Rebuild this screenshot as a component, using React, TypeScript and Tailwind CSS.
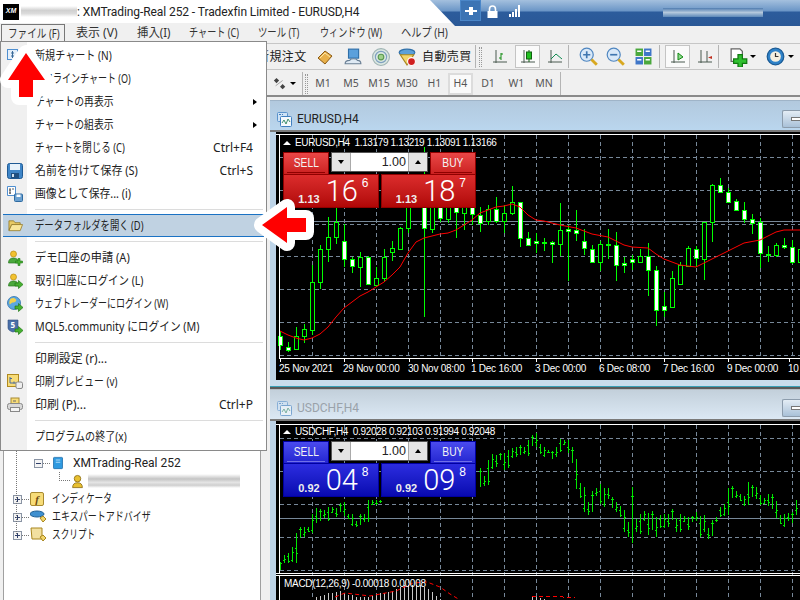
import type { ReactNode } from 'react';

type Candle = [number, number, number, number, number];

// read off the picture at 3x: high, low, body top, body bottom, white body (1) or hollow (0)
const CANDLES_LEFT: Candle[] = [
  [483, 540, 497, 525, 1], [517, 545, 530, 541, 1], [472, 540, 497, 538, 0], [462, 518, 478, 499, 0],
  [286, 495, 337, 479, 0], [225, 358, 238, 337, 0], [141, 275, 202, 238, 0], [100, 221, 157, 202, 0],
  [163, 292, 214, 268, 1], [262, 308, 268, 288, 1], [246, 352, 262, 292, 0], [258, 346, 262, 342, 1],
  [292, 352, 325, 346, 0], [238, 335, 262, 325, 0], [213, 272, 235, 247, 0], [170, 240, 175, 236, 0],
  [60, 188, 100, 175, 0], [40, 100, 60, 90, 0], [-70, 440, 90, 175, 1], [90, 188, 100, 176, 0],
  [90, 155, 100, 145, 1], [90, 158, 100, 146, 0], [90, 205, 100, 127, 1], [90, 180, 100, 130, 0],
  [90, 165, 100, 133, 1], [112, 186, 134, 160, 1], [105, 165, 118, 152, 0], [80, 160, 118, 152, 1],
  [105, 190, 130, 152, 0], [48, 135, 97, 130, 0], [98, 230, 97, 205, 1], [185, 228, 205, 226, 1],
];

const CANDLES_RIGHT: Candle[] = [
  [400, 458, 424, 428, 1], [414, 452, 426, 430, 1], [424, 488, 427, 433, 1], [310, 468, 391, 433, 0],
  [375, 542, 388, 392, 1], [330, 422, 389, 400, 1], [388, 465, 424, 445, 1], [436, 488, 446, 487, 1],
  [424, 512, 433, 485, 0], [388, 476, 432, 434, 1], [396, 542, 436, 496, 1], [470, 518, 490, 496, 1],
  [465, 510, 478, 487, 1], [447, 490, 469, 487, 0], [430, 587, 469, 511, 1], [498, 677, 511, 631, 1],
  [575, 650, 619, 631, 1], [514, 625, 535, 620, 0], [487, 551, 496, 551, 0], [438, 497, 445, 497, 0],
  [438, 502, 448, 475, 1], [365, 539, 367, 478, 0], [252, 425, 256, 367, 0], [235, 280, 256, 277, 1],
  [265, 310, 277, 307, 1], [298, 332, 304, 331, 1], [306, 370, 331, 358, 1], [343, 402, 358, 368, 1],
  [355, 503, 367, 460, 1], [438, 485, 461, 464, 1], [430, 470, 436, 464, 0], [415, 447, 436, 442, 1],
  [420, 492, 442, 487, 1], [430, 500, 448, 487, 0],
];

const MA_POINTS = [
  [280, 331], [288, 335], [296, 338], [304, 340], [312, 338], [320, 334], [328, 327], [336, 317], [344, 308],
  [352, 302], [360, 296], [368, 292], [376, 287], [384, 282], [392, 275], [400, 267], [408, 253], [416, 242],
  [424, 238], [432, 236], [440, 234], [448, 233], [456, 230], [464, 225], [472, 220], [480, 213], [488, 210],
  [496, 207], [504, 206], [512, 204], [520, 207], [528, 215], [536, 220], [544, 221], [560, 225], [576, 228],
  [592, 234], [608, 237], [624, 245], [632, 247], [648, 248], [656, 254], [664, 259], [680, 265], [696, 267],
  [712, 259], [728, 251], [744, 243], [760, 240], [776, 232], [784, 230], [800, 230],
];

const BARS_LEFT = [
  [515, 540], [495, 520], [490, 518], [470, 515], [430, 518], [412, 445], [410, 440], [410, 425], [372, 430],
  [355, 398], [358, 392], [360, 385], [350, 394], [350, 370], [355, 382], [338, 365], [335, 378], [372, 388],
  [372, 408], [392, 412], [372, 405], [372, 395], [330, 395], [330, 345], [330, 345], [330, 340],
];

const BARS_MID = [
  [235, 290], [258, 288], [210, 285], [192, 238], [195, 232], [188, 210], [190, 240], [180, 235], [175, 205],
  [170, 202], [165, 195], [170, 192], [150, 198],
];

const BARS_RIGHT = [
  [135, 167], [128, 170], [162, 192], [172, 202], [180, 190], [183, 207], [172, 200], [148, 186], [150, 165],
  [150, 190], [172, 218], [208, 296], [280, 323], [292, 365], [335, 375], [303, 365], [295, 318], [282, 342],
  [295, 352], [295, 327], [320, 355], [335, 365], [348, 382], [360, 425], [396, 442], [290, 458], [387, 426],
  [372, 432], [363, 392], [370, 435], [363, 420], [382, 440], [376, 415], [373, 415], [372, 410], [358, 390],
  [385, 426], [373, 426], [378, 395], [382, 420], [378, 395], [366, 392], [378, 442], [376, 425], [415, 446],
  [390, 437], [382, 395], [350, 382], [342, 378], [293, 375], [288, 325], [303, 325], [312, 333], [318, 347],
  [276, 345], [285, 322], [292, 327], [316, 345], [325, 342], [312, 347], [312, 357], [333, 384], [375, 402],
  [372, 412], [370, 392], [365, 398], [330, 375],
];

const MACD_TOPS = [
  622, 618, 615, 608, 608, 606, 604, 608, 614, 614, 620, 622, 622, 622, 618, 612, 610, 608, 606, 602, 596, 590,
  586, 584, 584, 584, 586, 590, 598, 606, 618, 628,
];

const AXIS_LABELS = [
  [279, '25 Nov 2021'], [343, '29 Nov 00:00'], [408, '30 Nov 08:00'], [471, '1 Dec 16:00'], [535, '3 Dec 00:00'],
  [599, '6 Dec 08:00'], [663, '7 Dec 16:00'], [727, '9 Dec 00:00'], [788, '10'],
] as const;

const V_GRID = [312, 344, 376, 408, 440, 472, 504, 536, 568, 600, 632, 664, 696, 728, 760, 792];
const GRID = '#778899';

function CandleMark({ x, c, base }: { x: number; c: Candle; base: number }) {
  const y = (v: number) => Math.round(base + v / 3);
  return (
    <g>
      <line x1={x + 0.5} x2={x + 0.5} y1={y(c[0])} y2={y(c[1])} stroke="#00ff00" />
      <rect
        x={x - 1.5}
        y={y(c[2]) + 0.5}
        width={4}
        height={Math.max(y(c[3]) - y(c[2]), 1)}
        fill={c[4] ? '#ffffff' : '#000000'}
        stroke="#00ff00"
      />
    </g>
  );
}

function BarMark({ x, h, l, i, base }: { x: number; h: number; l: number; i: number; base: number }) {
  const top = Math.round(base + h / 3);
  const bottom = Math.round(base + l / 3);
  const open = Math.round(top + ((bottom - top) * ((i * 3) % 5 + 1)) / 6);
  const close = Math.round(top + ((bottom - top) * ((i * 7) % 5 + 1)) / 6);
  return (
    <g>
      <line x1={x + 0.5} x2={x + 0.5} y1={top} y2={bottom} stroke="#00e800" />
      <line x1={x - 1} x2={x} y1={open + 0.5} y2={open + 0.5} stroke="#00e800" />
      <line x1={x + 1} x2={x + 2} y1={close + 0.5} y2={close + 0.5} stroke="#00e800" />
    </g>
  );
}

function EurChart() {
  const hLines = [157, 190, 224, 256, 289, 322, 355];
  return (
    <svg viewBox="276 132 524 248" className="absolute inset-0 h-full w-full" shapeRendering="crispEdges">
      {V_GRID.map((x) => (
        <line key={x} x1={x + 0.5} x2={x + 0.5} y1={135} y2={358} stroke={GRID} strokeDasharray="4 3" />
      ))}
      {hLines.map((y) => (
        <line key={y} x1={280} x2={800} y1={y + 0.5} y2={y + 0.5} stroke={GRID} strokeDasharray="4 3" />
      ))}
      <line x1={280} x2={800} y1={221.5} y2={221.5} stroke={GRID} />
      {CANDLES_LEFT.map((c, i) => (
        <CandleMark key={i} x={280 + i * 8} c={c} base={170} />
      ))}
      {CANDLES_RIGHT.map((c, i) => (
        <CandleMark key={i} x={536 + i * 8} c={c} base={100} />
      ))}
      <polyline
        points={MA_POINTS.map((p) => p.join(',')).join(' ')}
        fill="none"
        stroke="#ff0000"
        shapeRendering="auto"
      />
      <path d="M276 134.5H800M279.5 134V358M279 358.5H800" stroke="#ffffff" />
      {AXIS_LABELS.map(([x, label]) => (
        <g key={x}>
          <line x1={x + 1.5} x2={x + 1.5} y1={358} y2={362} stroke="#ffffff" />
          <text x={x} y={372} fill="#ffffff" fontSize={10} letterSpacing={-0.25} shapeRendering="auto">
            {label}
          </text>
        </g>
      ))}
    </svg>
  );
}

function ChfChart() {
  const hLines = [438, 471, 504, 537, 570];
  return (
    <svg viewBox="276 421 524 179" className="absolute inset-0 h-full w-full" shapeRendering="crispEdges">
      {V_GRID.map((x) => (
        <line key={x} x1={x + 0.5} x2={x + 0.5} y1={425} y2={600} stroke={GRID} strokeDasharray="4 3" />
      ))}
      {hLines.map((y) => (
        <line key={y} x1={280} x2={800} y1={y + 0.5} y2={y + 0.5} stroke={GRID} strokeDasharray="4 3" />
      ))}
      <line x1={280} x2={800} y1={518.5} y2={518.5} stroke={GRID} />
      {BARS_LEFT.map(([h, l], i) => (
        <BarMark key={i} x={280 + i * 4} h={h} l={l} i={i} base={390} />
      ))}
      {BARS_MID.map(([h, l], i) => (
        <BarMark key={i} x={480 + i * 4} h={h} l={l} i={i} base={390} />
      ))}
      {BARS_RIGHT.map(([h, l], i) => (
        <BarMark key={i} x={532 + i * 4} h={h} l={l} i={i} base={390} />
      ))}
      {MACD_TOPS.map((t, i) => (
        <line key={i} x1={316.5 + i * 4} x2={316.5 + i * 4} y1={Math.round(390 + t / 3)} y2={600} stroke="#c8c8c8" />
      ))}
      {[0, 4, 8, 12, 16, 20].map((d, i) => (
        <line key={d} x1={532.5 + d} x2={532.5 + d} y1={596 + i} y2={600} stroke="#c8c8c8" />
      ))}
      <polyline
        points="335,597 345,593 370,596 396,591 413,583 427,582 440,587 450,594 460,600"
        fill="none"
        stroke="#ff0000"
        strokeDasharray="4 3"
        shapeRendering="auto"
      />
      <polyline points="532,596 550,596 575,598" fill="none" stroke="#ff0000" strokeDasharray="4 3" />
      <path d="M276 424.5H800M279.5 424V573M276 573.5H800M276 575.5H800M279.5 576V600" stroke="#ffffff" />
    </svg>
  );
}

const RED = {
  button: 'border-[#8f0000] bg-linear-to-b from-[#ea4646] to-[#cb2020]',
  price: 'border-[#8f0000] bg-linear-to-b from-[#dc2c2c] to-[#b00606]',
  rule: 'bg-[#8f0000]',
};

const BLUE = {
  button: 'border-[#0000a0] bg-linear-to-b from-[#4a4aee] to-[#2424d0]',
  price: 'border-[#0000a0] bg-linear-to-b from-[#2c2ce0] to-[#0808b0]',
  rule: 'bg-[#7070e8]',
};

function SideButton({ label, theme }: { label: string; theme: typeof RED }) {
  return (
    <div className={`flex h-[22px] w-[46px] flex-col items-center border-x border-t pt-[2px] ${theme.button}`}>
      <span className="scale-x-[.82] text-[12.5px] leading-[16px] text-[#f4f4f4]">{label}</span>
      <span className={`mt-[1px] h-px w-[38px] ${theme.rule}`} />
    </div>
  );
}

function Price({ lead, big, tail, theme }: { lead: string; big: string; tail: string; theme: typeof RED }) {
  return (
    <div className={`flex h-[34px] flex-1 items-start justify-end border pr-[9px] text-white ${theme.price}`}>
      <span className="mt-[17px] mr-[6px] text-[11px] leading-[14px] font-bold text-[#eee]">{lead}</span>
      <span className="mt-[1px] font-['Roboto',sans-serif] text-[29px] leading-[30px] font-light">{big}</span>
      <span className="mt-[1px] ml-[4px] text-[12px] leading-[14px]">{tail}</span>
    </div>
  );
}

function TradePanel({ lead, sell, sellTail, buy, buyTail, theme }: {
  lead: string;
  sell: string;
  sellTail: string;
  buy: string;
  buyTail: string;
  theme: typeof RED;
}) {
  return (
    <div className="absolute top-[20px] left-[7px] w-[193px] font-['Liberation_Sans',sans-serif]">
      <div className="flex items-start gap-[2px]">
        <SideButton label="SELL" theme={theme} />
        <div className="flex h-[20px] w-[97px] border border-[#555] bg-white text-[#222]">
          <span className="flex w-[19px] items-center justify-center border-r border-[#aaa] bg-[#e4e4e4]">
            <span className="h-0 w-0 border-x-[3px] border-t-[4px] border-x-transparent border-t-black" />
          </span>
          <span className="flex-1 pr-[2px] text-right text-[12.5px] leading-[18px]">1.00</span>
          <span className="flex w-[19px] items-center justify-center border-l border-[#aaa] bg-[#e4e4e4]">
            <span className="h-0 w-0 border-x-[3px] border-b-[4px] border-x-transparent border-b-black" />
          </span>
        </div>
        <SideButton label="BUY" theme={theme} />
      </div>
      <div className="flex gap-[2px]">
        <Price lead={lead} big={sell} tail={sellTail} theme={theme} />
        <Price lead={lead} big={buy} tail={buyTail} theme={theme} />
      </div>
    </div>
  );
}

function WindowIcon({ dim }: { dim?: boolean }) {
  return (
    <svg viewBox="0 0 15 15" className={`h-[15px] w-[15px] ${dim ? 'opacity-60' : ''}`}>
      <rect x="0.5" y="0.5" width="10" height="9" rx="1" fill="#cfe3f6" stroke="#5b93cc" />
      <rect x="3.5" y="4.5" width="11" height="10" rx="1" fill="#f4f9fd" stroke="#3f7fc0" />
      <path d="M2 2.5h2M5 2.5h1" stroke="#3f7fc0" />
      <path d="M5 11l2-3 2 4 2-5 2 3" fill="none" stroke="#3f8f6f" />
    </svg>
  );
}

function ChartWindow({ title, active, chartClass, children }: {
  title: string;
  active?: boolean;
  chartClass: string;
  children: ReactNode;
}) {
  return (
    <div className="flex w-[530px] shrink-0 flex-col">
      <div
        className={`relative flex h-[30px] shrink-0 items-center gap-[5px] border-t pt-[7px] pl-[7px] ${
          active
            ? 'border-[#9fb4c8] bg-linear-to-b from-[#b2c9de] to-[#bad6ee] text-[#222]'
            : 'border-[#b4bcc4] bg-linear-to-b from-[#c3d0db] to-[#dbe8f4] text-[#9aa2aa]'
        }`}
      >
        <WindowIcon dim={!active} />
        <span className="font-['Roboto',sans-serif] text-[12px]">{title}</span>
        <span className="absolute top-[9px] right-0 flex h-[18px] w-[18px] items-center justify-end rounded-l-[2px] border border-r-0 border-[#8c9cac] bg-linear-to-b from-[#e4edf5] to-[#a9c1d8]">
          <span className="h-[4px] w-[9px] border border-r-0 border-[#777] bg-white" />
        </span>
      </div>
      <div className="h-[2px] shrink-0 bg-[#7a7a7a]" />
      <div className="flex bg-[#bdd4e8] pl-[6px]">
        <div className={`relative w-[524px] bg-black font-['Liberation_Sans',sans-serif] ${chartClass}`}>{children}</div>
      </div>
    </div>
  );
}

function ChartHeader({ text }: { text: string }) {
  return (
    <div className="absolute top-[5px] left-[7px] flex items-center gap-[4px] text-[10px] leading-[12px] tracking-[-0.35px] whitespace-pre text-white">
      <span className="h-0 w-0 border-x-[4px] border-b-[4px] border-x-transparent border-b-white" />
      <span>{text}</span>
    </div>
  );
}

const Svg = ({ children, className = 'h-4 w-4' }: { children: ReactNode; className?: string }) => (
  <svg viewBox="0 0 16 16" className={className}>
    {children}
  </svg>
);

const Person = () => (
  <>
    <circle cx="6.5" cy="4" r="3" fill="#f2c230" stroke="#b88a10" strokeWidth="0.7" />
    <path d="M1.5 13c0-3.5 2-5 5-5s5 1.500 5 5z" fill="#4aa83c" stroke="#2c7a24" strokeWidth="0.7" />
  </>
);

const GreenArrow = () => (
  <path d="M8 10h3.500V7.500L16 11.500 11.500 15.500V13H8z" fill="#46b030" stroke="#1f7a16" strokeWidth="0.7" />
);

const MENU_ICONS: Record<string, ReactNode> = {
  chart: (
    <Svg>
      <rect x="0.5" y="1.500" width="10" height="10" fill="#e6f0fa" stroke="#4f8fd0" />
      <path d="M5.500 3v7M4 5h3M4 8h3" stroke="#3a6a9a" />
    </Svg>
  ),
  save: (
    <Svg>
      <rect x="0.500" y="0.500" width="15" height="15" rx="2" fill="#3f86c8" stroke="#1f5a94" />
      <rect x="3" y="1" width="10" height="6" fill="#e8f2fa" />
      <rect x="4" y="10" width="8" height="5" fill="#1f4f80" />
      <rect x="5" y="11" width="2" height="3" fill="#cfe0ee" />
    </Svg>
  ),
  saveAs: (
    <Svg>
      <path d="M0.500 0.500h8v9h-8z" fill="#fff" stroke="#4f8fd0" />
      <path d="M3 2v6M2 4h2M2 7h2M6 2v2" stroke="#333" strokeWidth="0.8" />
      <rect x="7.500" y="8" width="8" height="7.500" rx="1" fill="#6aa0d0" stroke="#2f6aa0" />
      <rect x="9.500" y="8.500" width="4" height="2.500" fill="#fff" />
    </Svg>
  ),
  folder: (
    <Svg className="h-[15px] w-[17px]">
      <path d="M1 3h5l1.500 2H13v2H4L1 13z" fill="#e7c964" stroke="#8f7420" strokeWidth="0.8" />
      <path d="M4 7h11.500L13 13.500H1z" fill="#f8e69a" stroke="#8f7420" strokeWidth="0.8" />
    </Svg>
  ),
  demo: (
    <Svg>
      <Person />
      <path d="M11 8.500h2v2.500h2.500v2H13v2.500h-2V13H8.500v-2H11z" fill="#46b030" stroke="#1f7a16" strokeWidth="0.6" />
    </Svg>
  ),
  login: (
    <Svg>
      <Person />
      <GreenArrow />
    </Svg>
  ),
  web: (
    <Svg>
      <circle cx="7" cy="7" r="6.500" fill="#5ba7e0" stroke="#2c6ea8" strokeWidth="0.8" />
      <path d="M4 2.500c2-1 4-.5 5 1s-1 3-3 3-3 3-3.500 1.500S2.500 3.500 4 2.500z" fill="#f2d04a" />
      <GreenArrow />
    </Svg>
  ),
  mql: (
    <Svg>
      <path d="M1 1h10v8c0 2-3 3.500-5 4-2-.5-5-2-5-4z" fill="#4a6fa8" stroke="#2f4d80" strokeWidth="0.6" />
      <text x="3.500" y="8.500" fontSize="8" fontWeight="700" fill="#fff">
        5
      </text>
      <GreenArrow />
    </Svg>
  ),
  preview: (
    <Svg>
      <rect x="0.500" y="0.500" width="11" height="12" fill="#f7dc78" stroke="#b08a20" />
      <path d="M3 3v6h6M3 4.500h2M7 7.500v2" stroke="#4a6a9a" fill="none" />
      <rect x="9" y="8" width="6.500" height="6.500" rx="1.500" fill="#eee" stroke="#888" />
    </Svg>
  ),
  print: (
    <Svg>
      <rect x="4" y="1" width="8" height="6" fill="#f7dc78" stroke="#a88a30" />
      <path d="M6 4h3" stroke="#666" />
      <rect x="0.500" y="6.500" width="15" height="6" rx="2" fill="#d8d8d8" stroke="#888" />
      <rect x="3.500" y="10.500" width="9" height="4" fill="#f4f4f4" stroke="#888" />
    </Svg>
  ),
};

type MenuRow = {
  label?: string;
  fit?: string;
  icon?: string;
  key?: string;
  sub?: boolean;
  on?: boolean;
  rule?: boolean;
};

// the original UI font has narrow kana, so each label is squeezed to its width in the picture
const MENU: MenuRow[] = [
  { label: '新規チャート (N)', fit: 'scale-x-[.84]', icon: 'chart' },
  { label: 'オフラインチャート (O)', fit: 'scale-x-[.75]' },
  { label: 'チャートの再表示', fit: 'scale-x-[.82]', sub: true },
  { label: 'チャートの組表示', fit: 'scale-x-[.82]', sub: true },
  { label: 'チャートを閉じる (C)', fit: 'scale-x-[.79]', key: 'Ctrl+F4' },
  { label: '名前を付けて保存 (S)', fit: 'scale-x-[.91]', icon: 'save', key: 'Ctrl+S' },
  { label: '画像として保存... (i)', fit: 'scale-x-[.9]', icon: 'saveAs' },
  { rule: true },
  { label: 'データフォルダを開く (D)', fit: 'scale-x-[.78]', icon: 'folder', on: true },
  { rule: true },
  { label: 'デモ口座の申請 (A)', fit: 'scale-x-[.93]', icon: 'demo' },
  { label: '取引口座にログイン (L)', fit: 'scale-x-[.87]', icon: 'login' },
  { label: 'ウェブトレーダーにログイン (W)', fit: 'scale-x-[.75]', icon: 'web' },
  { label: 'MQL5.community にログイン (M)', fit: 'scale-x-[.89]', icon: 'mql' },
  { rule: true },
  { label: '印刷設定 (r)...', fit: 'scale-x-[.99]' },
  { label: '印刷プレビュー (v)', fit: 'scale-x-[.82]', icon: 'preview' },
  { label: '印刷 (P)...', fit: 'scale-x-100', icon: 'print', key: 'Ctrl+P' },
  { rule: true },
  { label: 'プログラムの終了(x)', fit: 'scale-x-[.84]' },
];

function FileMenu() {
  return (
    <div className="absolute top-[41px] left-0 z-10 w-[267px] border border-[#8a8a8a] bg-[linear-gradient(90deg,#f0f0f0_26px,#ffffff_26px)] py-[2px] text-[12px] text-[#222]">
      {MENU.map((row, i) =>
        row.rule ? (
          <div key={i} className="flex h-[9px] items-center pr-[3px] pl-[34px]">
            <div className="h-px w-full bg-[#dcdcdc]" />
          </div>
        ) : (
          <div
            key={row.label}
            className={`mx-[2px] flex h-[23px] items-center ${row.on ? 'border-y border-[#1a72c4] bg-[#c0d2e2]' : ''}`}
          >
            <span className="flex w-[32px] shrink-0 justify-start pl-[4px]">{row.icon && MENU_ICONS[row.icon]}</span>
            <span className="flex-1">
              <span className={`inline-block origin-left whitespace-nowrap ${row.fit}`}>{row.label}</span>
            </span>
            {row.key && <span className="pr-[11px]">{row.key}</span>}
            {row.sub && (
              <span className="mr-[7px] h-0 w-0 border-y-[3px] border-l-[4px] border-y-transparent border-l-black" />
            )}
          </div>
        ),
      )}
    </div>
  );
}

const Sep = ({ className = '' }: { className?: string }) => (
  <span className={`h-[23px] w-px shrink-0 bg-[#b4b4b4] ${className}`} />
);

const Grip = ({ className = '' }: { className?: string }) => (
  <span className={`h-[20px] w-[3px] shrink-0 border-x border-dotted border-[#999] ${className}`} />
);

const Caret = () => <span className="h-0 w-0 border-x-[3px] border-t-[3px] border-x-transparent border-t-black" />;

function Tool({ className, active, children }: { className: string; active?: boolean; children: ReactNode }) {
  return (
    <span
      className={`flex h-[23px] shrink-0 items-center justify-center ${className} ${
        active ? 'border border-[#c4c4c4] bg-[#fafafa]' : ''
      }`}
    >
      {children}
    </span>
  );
}

const Axes = () => <path d="M4 1v13M1 13h14" stroke="#4a5a50" fill="none" />;

function TopToolbar() {
  return (
    <div className="flex h-[27px] shrink-0 items-center border-y border-[#c6c6c6] pl-[257px] text-[12px] text-[#222]">
      <span className="w-[48px] shrink-0 tracking-[0.4px] whitespace-nowrap">新規注文</span>
      <Tool className="ml-[6px] w-[28px]">
        <Svg className="h-[16px] w-[16px]">
          <path d="M1 9l7-7 7 5-7 8z" fill="#e8b04a" stroke="#8a5a14" />
          <path d="M3 9l5-5 5 4" fill="none" stroke="#fbe7a8" />
        </Svg>
      </Tool>
      <Tool className="w-[28px]">
        <Svg className="h-[18px] w-[18px]">
          <rect x="4" y="1" width="9" height="8" fill="#5ba0dc" stroke="#2f6fa8" />
          <path d="M1 14c0-2 2-3 4-3 1-2 6-2 7 0 2 0 3 1 3 3z" fill="#dfeaf4" stroke="#6a7f94" />
        </Svg>
      </Tool>
      <Tool className="w-[27px]">
        <Svg className="h-[18px] w-[18px]">
          <circle cx="8" cy="8" r="7.500" fill="#dbe8e2" stroke="#a0b4b4" />
          <circle cx="8" cy="8" r="5" fill="none" stroke="#7fa0c0" />
          <circle cx="8" cy="8" r="2.500" fill="#9ed08a" stroke="#5a9a50" />
        </Svg>
      </Tool>
      <Tool className="w-[26px]">
        <Svg className="h-[18px] w-[18px]">
          <ellipse cx="8" cy="4" rx="7" ry="3" fill="#5ba0d8" stroke="#2f6fa8" />
          <path d="M2 6l6 9 6-9z" fill="#f2d56a" stroke="#a8861e" />
          <circle cx="12" cy="12" r="3.500" fill="#d02020" stroke="#fff" />
        </Svg>
      </Tool>
      <span className="ml-[2px] w-[45px] shrink-0 tracking-[0.4px] whitespace-nowrap">自動売買</span>
      <Sep className="ml-[8px]" />
      <Grip className="ml-[3px]" />
      <Tool className="ml-[4px] w-[28px]">
        <Svg>
          <Axes />
          <path d="M9 4v7M9 5h2M7 9h2" stroke="#108a10" fill="none" />
        </Svg>
      </Tool>
      <Tool className="ml-px w-[25px]" active>
        <Svg>
          <Axes />
          <path d="M9 1v12" stroke="#106010" />
          <rect x="6.500" y="3" width="5" height="7" fill="#20c020" stroke="#106010" />
        </Svg>
      </Tool>
      <Tool className="ml-[2px] w-[26px]">
        <Svg>
          <Axes />
          <path d="M4 10l5-5 6 5" fill="none" stroke="#108a50" />
        </Svg>
      </Tool>
      <Sep />
      <Tool className="ml-[5px] w-[28px]">
        <Svg className="h-[19px] w-[19px]">
          <circle cx="6.500" cy="6.500" r="5.500" fill="#d8e8f8" stroke="#4f86c0" />
          <path d="M3.500 6.500h6M6.500 3.500v6" stroke="#3f76b0" strokeWidth="1.400" />
          <path d="M10.500 10.500l4.500 4.500" stroke="#d8a820" strokeWidth="2.400" />
        </Svg>
      </Tool>
      <Tool className="w-[27px]">
        <Svg className="h-[19px] w-[19px]">
          <circle cx="6.500" cy="6.500" r="5.500" fill="#d8e8f8" stroke="#4f86c0" />
          <path d="M3.500 6.500h6" stroke="#3f76b0" strokeWidth="1.400" />
          <path d="M10.500 10.500l4.500 4.500" stroke="#d8a820" strokeWidth="2.400" />
        </Svg>
      </Tool>
      <Tool className="w-[28px]">
        <Svg className="h-[17px] w-[17px]">
          <rect x="0.500" y="0.500" width="7" height="7" fill="#4aa83c" />
          <rect x="8.500" y="0.500" width="7" height="7" fill="#3f76c8" />
          <rect x="0.500" y="8.500" width="7" height="7" fill="#3f76c8" />
          <rect x="8.500" y="8.500" width="7" height="7" fill="#4aa83c" />
          <path d="M2 3h4M10 3h4M2 11h4M10 11h4" stroke="#fff" strokeWidth="1.500" />
        </Svg>
      </Tool>
      <Sep className="ml-[2px]" />
      <Tool className="ml-[5px] w-[25px]" active>
        <Svg>
          <Axes />
          <path d="M8 4l5 4-5 3z" fill="#8fd88f" stroke="#108a10" />
        </Svg>
      </Tool>
      <Tool className="ml-[2px] w-[26px]">
        <Svg>
          <Axes />
          <path d="M10 2v11" stroke="#4a5a50" />
          <path d="M15 7l-4 1.500 4 1.500z" fill="#c03020" />
        </Svg>
      </Tool>
      <Sep />
      <Tool className="ml-[6px] w-[25px]">
        <Svg className="h-[20px] w-[20px]">
          <path d="M2.500 1.500h7l2 2v8h-9z" fill="#fff" stroke="#666" />
          <path d="M8 6h3.500v3.500H15V13h-3.500v3H8v-3H4.500V9.500H8z" fill="#30c030" stroke="#107a10" />
        </Svg>
      </Tool>
      <Caret />
      <Tool className="ml-[6px] w-[26px]">
        <Svg className="h-[19px] w-[19px]">
          <circle cx="8" cy="8" r="7" fill="#2f82c8" stroke="#1a5a94" />
          <circle cx="8" cy="8" r="4.500" fill="#f4efe0" />
          <path d="M8 5v3h2.500" stroke="#333" fill="none" />
        </Svg>
      </Tool>
      <Caret />
    </div>
  );
}

const PERIODS = [
  ['M1', 'w-[28px]'], ['M5', 'w-[28px]'], ['M15', 'w-[28px]'], ['M30', 'w-[28px]'], ['H1', 'w-[27px]'],
];
const PERIODS_AFTER = [
  ['D1', 'ml-[1px] w-[28px]'], ['W1', 'w-[29px]'], ['MN', 'w-[26px]'],
];

function PeriodToolbar() {
  return (
    <div className="flex h-[27px] shrink-0 items-center border-b-2 border-[#8a8a8a] pt-[2px] pl-[270px] text-[10.5px] text-[#555]">
      <Tool className="w-[20px]">
        <Svg className="h-[14px] w-[14px]">
          <path d="M1 4l3-3 3 3-3 3zM8 11l3-3 3 3-3 3z" fill="#444" />
          <path d="M3 10l8-6" stroke="#999" />
        </Svg>
      </Tool>
      <Caret />
      <Sep className="ml-[6px]" />
      <Grip className="ml-[2px]" />
      <span className="w-[1px]" />
      {PERIODS.map(([p, w]) => (
        <span key={p} className={`${w} shrink-0 text-center`}>
          {p}
        </span>
      ))}
      <span className="flex h-[22px] w-[25px] shrink-0 items-center justify-center border-2 border-[#dcdcdc] bg-[#fafafa]">
        H4
      </span>
      {PERIODS_AFTER.map(([p, w]) => (
        <span key={p} className={`${w} shrink-0 text-center`}>
          {p}
        </span>
      ))}
      <Sep className="ml-[3px]" />
    </div>
  );
}

const Plus = () => (
  <span className="relative flex h-[9px] w-[9px] shrink-0 items-center justify-center border border-[#8a94a4] bg-[#f4f4f4]">
    <span className="h-px w-[5px] bg-[#2f3f6a]" />
    <span className="absolute h-[5px] w-px bg-[#2f3f6a]" />
  </span>
);

function TreeRow({ label, fit, icon }: { label: string; fit: string; icon: ReactNode }) {
  return (
    <div className="flex h-[18px] items-center pl-[9px]">
      <Plus />
      <span className="w-[7px] border-t border-dotted border-[#777]" />
      <span className="ml-[1px] flex w-[22px] shrink-0 justify-start">{icon}</span>
      <span className={`inline-block origin-left text-[12px] whitespace-nowrap text-[#222] ${fit}`}>{label}</span>
    </div>
  );
}

const UserGold = () => (
  <Svg className="h-[15px] w-[13px]">
    <circle cx="8" cy="4.500" r="4" fill="#e8c030" stroke="#8a6a10" />
    <path d="M2 15.500c0-4 2-6 6-6s6 2 6 6z" fill="#e8c030" stroke="#8a6a10" />
  </Svg>
);

function Navigator() {
  return (
    <div className="relative h-full w-[262px] shrink-0 bg-[#f0f0f0]">
      <div className="ml-[3px] h-full w-[258px] border-x border-[#a0a0a0] bg-white">
        <div className="pt-[357px]">
          <div className="flex h-[18px] items-center pl-[30px]">
            <span className="relative flex h-[9px] w-[9px] items-center justify-center border border-[#8a94a4] bg-[#f4f4f4]">
              <span className="h-px w-[5px] bg-[#2f3f6a]" />
            </span>
            <span className="w-[7px] border-t border-dotted border-[#777]" />
            <Svg className="ml-[2px] h-[16px] w-[12px]">
              <rect x="2" y="0.500" width="12" height="15" rx="1" fill="#2f9ae0" stroke="#1a6aa8" />
              <path d="M5 4h6M5 7h6" stroke="#d8f0ff" />
            </Svg>
            <span className="ml-[9px] font-['Roboto',sans-serif] text-[12px] whitespace-nowrap text-[#222]">
              XMTrading-Real 252
            </span>
          </div>
          <div className="flex h-[18px] items-center pl-[67px]">
            <span className="absolute top-[375px] left-[59px] h-[9px] w-[11px] border-b border-l border-dotted border-[#777]" />
            <UserGold />
            <span className="ml-[4px] h-[14px] w-[152px] bg-[linear-gradient(180deg,#ffffff,#c4c4c4_35%,#e4e4e4_60%,#cfcfcf_80%,#ffffff)]" />
          </div>
          <TreeRow
            label="インディケータ"
            fit="scale-x-[.72]"
            icon={
              <span className="flex h-[14px] w-[14px] items-center justify-center rounded-[2px] border border-[#a88a30] bg-[#f7dc78] font-['Liberation_Serif',serif] text-[11px] leading-none font-bold italic text-[#6a4a10]">
                f
              </span>
            }
          />
          <TreeRow
            label="エキスパートアドバイザ"
            fit="scale-x-[.75]"
            icon={
              <Svg>
                <ellipse cx="7" cy="5" rx="7" ry="3" fill="#3f90d0" stroke="#1f5f94" />
                <path d="M10 9l3-2 3 3-3 3z" fill="#f2d56a" stroke="#a8861e" />
              </Svg>
            }
          />
          <TreeRow
            label="スクリプト"
            fit="scale-x-[.72]"
            icon={
              <Svg>
                <path d="M1 1h11v11H2z" fill="#f2e0a0" stroke="#a8861e" />
                <path d="M10 10l3-2 3 3-3 3z" fill="#f2d56a" stroke="#a8861e" />
              </Svg>
            }
          />
        </div>
        <span className="absolute top-[353px] left-[16px] h-[84px] border-l border-dotted border-[#777]" />
      </div>
    </div>
  );
}

function StatusCorner() {
  return (
    <div className="absolute top-0 left-[430px] flex h-[26px] w-[370px] bg-[linear-gradient(180deg,#a4c0de,#6a95c6_11px,#2c5c9c_12px,#2a5896)] pl-[30px] [clip-path:polygon(0_0,100%_0,100%_100%,25px_100%)]">
      <span className="flex h-[21px] w-[21px] items-center justify-center border border-[#4a86c8] bg-[#3c74b4]">
        <svg viewBox="0 0 12 10" className="h-[10px] w-[12px]">
          <path d="M0 5h12M5 1v8M7 1v8" stroke="#fff" strokeWidth="2" />
        </svg>
      </span>
      <svg viewBox="0 0 11 13" className="mt-[5px] ml-[6px] h-[13px] w-[11px]">
        <path d="M2.500 6V4a3 3 0 0 1 6 0v2" fill="none" stroke="#fff" strokeWidth="1.600" />
        <rect x="0.500" y="6" width="10" height="7" fill="#fff" />
      </svg>
      <svg viewBox="0 0 11 12" className="mt-[5px] ml-[11px] h-[12px] w-[11px]">
        <path d="M0 9h2v3H0zM3 7h2v5H3zM6 4h2v8H6zM9 0h2v12H9z" fill="#fff" />
      </svg>
      <span className="mt-[8px] ml-[143px] h-[9px] w-[100px] bg-[linear-gradient(180deg,#4f7cb0,#b4c8dc_50%,#5c88b8)]" />
    </div>
  );
}

const TOP_MENU = [
  ['表示 (V)', 'w-[61px]', 'scale-x-100'],
  ['挿入(I)', 'w-[52px]', 'scale-x-[.95]'],
  ['チャート (C)', 'w-[69px]', 'scale-x-[.76]'],
  ['ツール (T)', 'w-[62px]', 'scale-x-[.78]'],
  ['ウィンドウ (W)', 'w-[81px]', 'scale-x-[.76]'],
  ['ヘルプ (H)', 'w-[70px]', 'scale-x-[.85]'],
];

export default function App() {
  return (
    <div className="relative flex h-[600px] w-[800px] flex-col overflow-hidden bg-[#f0f0f0] font-['Noto_Sans','Noto_Sans_CJK_JP',sans-serif]">
      <div className="flex h-[23px] shrink-0 items-center bg-white pl-[3px]">
        <span className="flex h-[16px] w-[16px] items-center justify-center bg-black font-['Liberation_Sans',sans-serif] text-[7px] font-bold italic text-white">
          XM
        </span>
        <span className="ml-[2px] h-[11px] w-[56px] bg-[linear-gradient(180deg,#ffffff,#d0d0d0_40%,#dcdcdc_70%,#ffffff)]" />
        <span className="font-['Roboto',sans-serif] text-[12px] tracking-[-0.08px] whitespace-nowrap text-[#222]">
          : XMTrading-Real 252 - Tradexfin Limited - EURUSD,H4
        </span>
      </div>
      <div className="flex h-[20px] shrink-0 items-center text-[12px] text-[#333]">
        <span className="mt-[1px] ml-px flex h-[19px] w-[64px] items-center border-x border-t border-[#777] pl-[6px]">
          <span className="inline-block origin-left scale-x-[.8] whitespace-nowrap">ファイル (F)</span>
        </span>
        <span className="w-[11px]" />
        {TOP_MENU.map(([label, w, fit]) => (
          <span key={label} className={`${w} shrink-0`}>
            <span className={`inline-block origin-left whitespace-nowrap ${fit}`}>{label}</span>
          </span>
        ))}
      </div>
      <TopToolbar />
      <PeriodToolbar />
      <div className="flex min-h-0 flex-1">
        <Navigator />
        <div className="ml-[8px] flex flex-col pt-[3px]">
          <ChartWindow title="EURUSD,H4" active chartClass="h-[248px]">
            <EurChart />
            <ChartHeader text="EURUSD,H4  1.13179 1.13219 1.13091 1.13166" />
            <TradePanel lead="1.13" sell="16" sellTail="6" buy="18" buyTail="7" theme={RED} />
          </ChartWindow>
          <div className="h-[6px] shrink-0 bg-[#c9dcec]" />
          <div className="h-px shrink-0 bg-[#3aa0b8]" />
          <div className="h-[2px] shrink-0 bg-[#5a5a5a]" />
          <ChartWindow title="USDCHF,H4" chartClass="h-[179px]">
            <ChfChart />
            <ChartHeader text="USDCHF,H4  0.92028 0.92103 0.91994 0.92048" />
            <div className="absolute top-[155px] left-[8px] text-[10px] tracking-[-0.3px] whitespace-nowrap text-white">
              MACD(12,26,9) -0.00018 0.00008
            </div>
            <TradePanel lead="0.92" sell="04" sellTail="8" buy="09" buyTail="8" theme={BLUE} />
          </ChartWindow>
        </div>
      </div>
      <StatusCorner />
      <FileMenu />
      <svg className="pointer-events-none absolute inset-0 z-20 h-[600px] w-[800px]" viewBox="0 0 800 600">
        <g fill="#ff0000" stroke="#ffffff" strokeWidth="16" strokeLinejoin="round" paintOrder="stroke">
          <path d="M26 53L45 80H33V97H19V80H8Z" />
          <path d="M262 225L287 207V218H306V232H287V243Z" />
        </g>
      </svg>
    </div>
  );
}
